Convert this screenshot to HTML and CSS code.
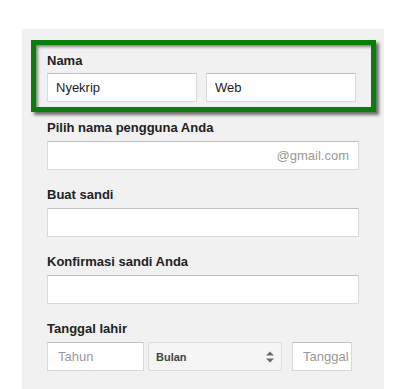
FILE: index.html
```html
<!DOCTYPE html>
<html lang="id">
<head>
    <meta charset="UTF-8">
    <meta name="viewport" content="width=device-width, initial-scale=1.0">
    <title>Buat Akun</title>
    <link rel="stylesheet" href="styles.css">
</head>

<body>
    <div class="panel">
        <div class="form-group highlight">
            <label for="firstName">Nama</label>
            <div class="name-row">
                <input type="text" id="firstName" class="name-input" value="Nyekrip">
                <input type="text" id="lastName" class="name-input" value="Web">
            </div>
        </div>

        <div class="form-group">
            <label for="username">Pilih nama pengguna Anda</label>
            <div class="user-box">
                <input type="text" id="username">
                <span class="suffix">@gmail.com</span>
            </div>
        </div>

        <div class="form-group">
            <label for="password">Buat sandi</label>
            <input type="password" id="password">
        </div>

        <div class="form-group">
            <label for="confirmPassword">Konfirmasi sandi Anda</label>
            <input type="password" id="confirmPassword">
        </div>

        <div class="form-group">
            <label for="year">Tanggal lahir</label>
            <div class="birth-row">
                <input type="text" id="year" class="year" placeholder="Tahun">
                <div class="month">
                    <span>Bulan</span>
                    <svg width="8" height="12" viewBox="0 0 8 12">
                        <path d="M0 4.5 L4 0.5 L8 4.5 Z" fill="#6a6a6a"/>
                        <path d="M0 7.5 L4 11.5 L8 7.5 Z" fill="#6a6a6a"/>
                    </svg>
                </div>
                <input type="text" id="day" class="day" placeholder="Tanggal">
            </div>
        </div>
    </div>
</body>
</html>
```

FILE: styles.css
```css
body {
    margin: 0;
    background: #fff;
    font-family: "Liberation Sans", Arial, sans-serif;
    color: #222;
}

.panel {
    background-color: #f1f1f1;
    width: 312px;
    margin: 29px 0 0 22px;
    padding: 11px 25px 30px;
}

.form-group {
    margin-bottom: 17px;
}

label {
    display: block;
    font-size: 13px;
    font-weight: bold;
    line-height: 16px;
    color: #222;
    margin-bottom: 5px;
}

input {
    display: block;
    width: 100%;
    height: 29px;
    box-sizing: border-box;
    margin: 0;
    padding: 0 8px;
    border: 1px solid #d9d9d9;
    border-top-color: #c0c0c0;
    border-radius: 1px;
    background: #fff;
    font-family: "Liberation Sans", Arial, sans-serif;
    font-size: 13px;
    color: #222;
    outline: none;
}

input::placeholder {
    color: #999;
}

/* kotak hijau di sekitar nama */
.highlight {
    margin: 0 -17px 8px -16px;
    padding: 8px 15px 5px 11px;
    border: 5px solid #0a7d0a;
    box-shadow: 3px 3px 3px rgba(0, 0, 0, 0.55), inset 2px 2px 3px rgba(0, 0, 0, 0.45);
}

.highlight label {
    margin-bottom: 4px;
}

.name-row {
    display: flex;
    gap: 9px;
    width: 309px;
}

.name-input {
    width: 150px;
}

.user-box {
    position: relative;
}

.suffix {
    position: absolute;
    right: 10px;
    top: 0;
    line-height: 29px;
    font-size: 13px;
    color: #999;
}

.birth-row {
    display: flex;
    align-items: flex-start;
}

.year {
    width: 97px;
    padding-left: 10px;
}

.month {
    width: 134px;
    height: 29px;
    box-sizing: border-box;
    margin-left: 4px;
    padding: 0 7px 0 7px;
    display: flex;
    align-items: center;
    justify-content: space-between;
    background: #f5f5f5;
    border: 1px solid #dcdcdc;
    border-radius: 2px;
    font-size: 11px;
    font-weight: bold;
    color: #444;
}

.day {
    width: 60px;
    margin-left: 10px;
    padding-left: 10px;
    padding-right: 0;
}
```
